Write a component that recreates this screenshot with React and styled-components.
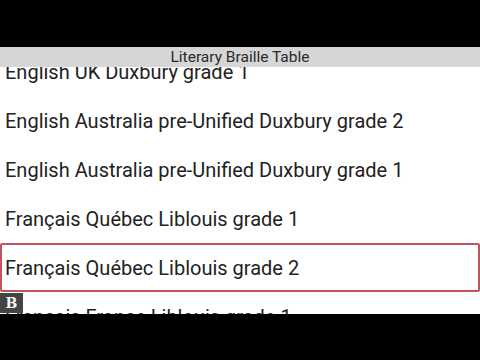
import React from 'react'
import styled, { createGlobalStyle } from 'styled-components'

const Global = createGlobalStyle`
  html, body {
    margin: 0;
    padding: 0;
    background: #000;
  }
  body {
    font-family: Roboto, "Noto Sans", sans-serif;
  }
`

const Screen = styled.div`
  width: 480px;
  height: 360px;
  background: #000;
  display: flex;
  flex-direction: column;
  overflow: hidden;
`

const TopBlack = styled.div`
  height: 47px;
  flex: none;
  background: #000;
`

const Viewport = styled.div`
  position: relative;
  height: 267px;
  flex: none;
  background: #fff;
  overflow: hidden;
`

const Header = styled.div`
  position: absolute;
  top: 0;
  left: 0;
  right: 0;
  height: 20px;
  background: #d6d6d6;
  color: #2a2a2a;
  font-size: 15.5px;
  line-height: 21px;
  text-align: center;
  z-index: 2;
`

const List = styled.ul`
  list-style: none;
  margin: 0;
  padding: 0;
`

const Item = styled.li`
  box-sizing: border-box;
  height: 49px;
  display: flex;
  align-items: center;
  font-size: 20px;
  color: #222;
  white-space: nowrap;
  border: 2px solid ${p => (p.$focused ? '#c25462' : 'transparent')};
  border-radius: 2px;
  padding-left: 3px;
`

const Badge = styled.div`
  position: absolute;
  left: 0;
  bottom: 1px;
  width: 23px;
  height: 20px;
  background: #444;
  color: #f4f4f4;
  font-family: "DejaVu Serif", serif;
  font-weight: bold;
  font-size: 14px;
  line-height: 20px;
  text-align: center;
  z-index: 2;
`

const tables = [
  'English UK Duxbury grade 1',
  'English Australia pre-Unified Duxbury grade 2',
  'English Australia pre-Unified Duxbury grade 1',
  'Français Québec Liblouis grade 1',
  'Français Québec Liblouis grade 2',
  'Français France Liblouis grade 1',
]

export default function App() {
  return (
    <>
      <Global />
      <Screen>
        <TopBlack />
        <Viewport>
          <Header>Literary Braille Table</Header>
          <List>
            {tables.map((t, i) => (
              <Item key={t} $focused={i === 4}>{t}</Item>
            ))}
          </List>
          <Badge>B</Badge>
        </Viewport>
      </Screen>
    </>
  )
}
